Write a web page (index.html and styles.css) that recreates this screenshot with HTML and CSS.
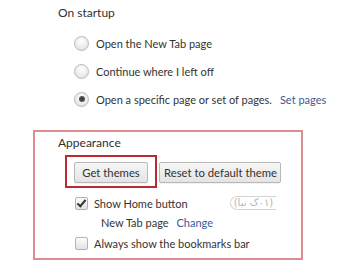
FILE: index.html
```html
<!DOCTYPE html>
<html lang="en">
<head>
  <meta charset="UTF-8">
  <title>Settings</title>
  <link rel="stylesheet" href="styles.css">
</head>
<body>

  <!-- On startup -->
  <div class="section startup">
    <h3>On startup</h3>
    <div class="option">
      <span class="radio"></span>
      <span>Open the New Tab page</span>
    </div>
    <div class="option">
      <span class="radio"></span>
      <span>Continue where I left off</span>
    </div>
    <div class="option">
      <span class="radio checked"></span>
      <span>Open a specific page or set of pages.</span>
      <a class="link set-pages">Set pages</a>
    </div>
  </div>

  <!-- Appearance -->
  <div class="section appearance">
    <h3>Appearance</h3>
    <div class="buttons">
      <span class="highlight"><button class="btn get-themes">Get themes</button></span>
      <button class="btn reset">Reset to default theme</button>
    </div>
    <div class="check-row home-row">
      <span class="checkbox checked"></span>
      <span>Show Home button</span>
      <span class="watermark">(٠١ک نیا)</span>
    </div>
    <div class="sub-row">
      <span>New Tab page</span>
      <a class="link">Change</a>
    </div>
    <div class="check-row">
      <span class="checkbox"></span>
      <span>Always show the bookmarks bar</span>
    </div>
  </div>

</body>
</html>
```

FILE: styles.css
```css
body {
  margin: 0;
  background: #fff;
  font-family: 'Lato', sans-serif;
  font-size: 11px;
  color: #333;
  width: 350px;
  height: 278px;
  overflow: hidden;
}

h3 {
  margin: 0;
  font-weight: normal;
  font-size: 12px;
  color: #303030;
  line-height: 18px;
}

.link {
  color: #3b5a99;
  cursor: pointer;
}

/* On startup */
.startup {
  padding: 4px 0 0 58px;
}

.startup .option {
  display: flex;
  align-items: center;
  height: 28px;
  margin-left: 16px;
}

.startup .option:first-of-type {
  margin-top: 7px;
}

.radio {
  box-sizing: border-box;
  width: 15px;
  height: 15px;
  border: 1px solid #b9b9b9;
  border-radius: 50%;
  background: radial-gradient(circle at 50% 35%, #ffffff 0%, #ececec 55%, #d9d9d9 100%);
  margin-right: 7px;
  display: flex;
  justify-content: center;
  align-items: center;
}

.radio.checked::after {
  content: "";
  width: 6px;
  height: 6px;
  border-radius: 50%;
  background: radial-gradient(circle, #333 0%, #555 60%, #777 100%);
}

.set-pages {
  margin-left: 8px;
}

/* Appearance */
.appearance {
  margin: 17px 0 0 33px;
  width: 270px;
  height: 130px;
  box-sizing: border-box;
  border: 2px solid #dc8e8e;
  padding: 2px 0 0 23px;
}

.buttons {
  display: flex;
  align-items: flex-start;
  margin-top: 3px;
}

.highlight {
  display: inline-block;
  border: 2px solid #bb2a2f;
  padding: 5px 7px 3px 7px;
  margin-left: 7px;
}

.btn {
  display: block;
  height: 21px;
  font-family: 'Lato', sans-serif;
  font-size: 11.3px;
  color: #333;
  border: 1px solid #b8b8b8;
  border-radius: 2px;
  background: linear-gradient(#f6f6f6, #e4e4e4);
  padding: 0 4px;
  white-space: nowrap;
  box-shadow: 0 1px 0 rgba(0, 0, 0, 0.05);
}

.get-themes {
  width: 74px;
}

.reset {
  width: 122px;
  margin: 7px 0 0 2px;
}

.check-row {
  display: flex;
  align-items: center;
  height: 20px;
  margin-left: 17px;
}

.home-row {
  margin-top: 5px;
}

.checkbox {
  box-sizing: border-box;
  width: 13px;
  height: 13px;
  border: 1px solid #b3b3b3;
  border-radius: 2px;
  background: linear-gradient(#fdfdfd, #e2e2e2);
  margin-right: 6px;
  position: relative;
}

.checkbox.checked::after {
  content: "";
  position: absolute;
  left: 3px;
  top: 0px;
  width: 3px;
  height: 7px;
  border: solid #333;
  border-width: 0 2px 2px 0;
  transform: rotate(40deg);
}

.sub-row {
  height: 20px;
  line-height: 20px;
  margin-left: 43px;
}

.sub-row .link {
  margin-left: 5px;
}

.watermark {
  margin-left: 42px;
  color: #b4b4b4;
  font-family: 'DejaVu Sans', sans-serif;
  font-size: 10px;
  border: 1px solid #d4d4d4;
  border-right: none;
  border-radius: 8px 0 0 8px;
  padding: 0 3px;
  line-height: 12px;
}
```
